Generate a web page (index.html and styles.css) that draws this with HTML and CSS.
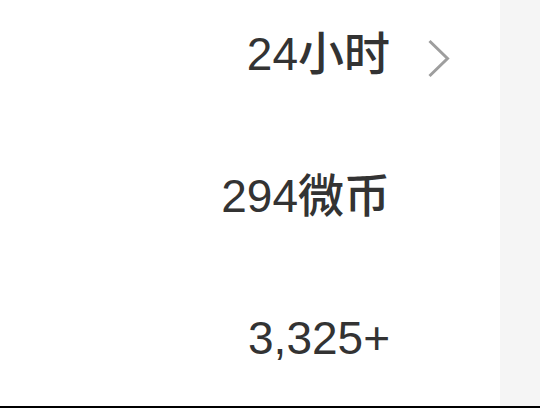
FILE: index.html
```html
<!DOCTYPE html>
<html lang="zh-CN">
<head>
<meta charset="utf-8">
<link rel="stylesheet" href="styles.css">
</head>
<body>
<div class="page">
  <div class="list">
    <div class="row">
      <span class="value">24小时</span>
      <svg class="arrow" width="24" height="60" viewBox="0 0 24 60" aria-hidden="true">
        <polyline points="2.5,17 20.5,34.5 2.5,52" fill="none" stroke="#9e9e9e" stroke-width="3"/>
      </svg>
    </div>
    <div class="row">
      <span class="value">294微币</span>
      <span class="arrow"></span>
    </div>
    <div class="row">
      <span class="value">3,325+</span>
      <span class="arrow"></span>
    </div>
  </div>
  <div class="side"></div>
</div>
</body>
</html>
```
FILE: styles.css
```css
html, body {
  margin: 0;
  padding: 0;
  background: #ffffff;
}
.page {
  display: flex;
  width: 540px;
  height: 406px;
  border-bottom: 2px solid #000000;
  overflow: hidden;
}
.list {
  width: 500px;
  display: flex;
  flex-direction: column;
  gap: 82px;
  padding-top: 24px;
  box-sizing: border-box;
}
.row {
  display: flex;
  justify-content: flex-end;
  align-items: center;
  height: 60px;
  padding-right: 49px;
}
.value {
  font-family: "Liberation Sans", "Noto Sans CJK SC", sans-serif;
  font-size: 46px;
  font-weight: 500;
  line-height: 60px;
  color: #333333;
  white-space: nowrap;
}
.arrow {
  display: block;
  width: 24px;
  height: 60px;
  margin-left: 37px;
  flex: none;
}
.side {
  flex: 1;
  background: #f5f5f5;
}
```
